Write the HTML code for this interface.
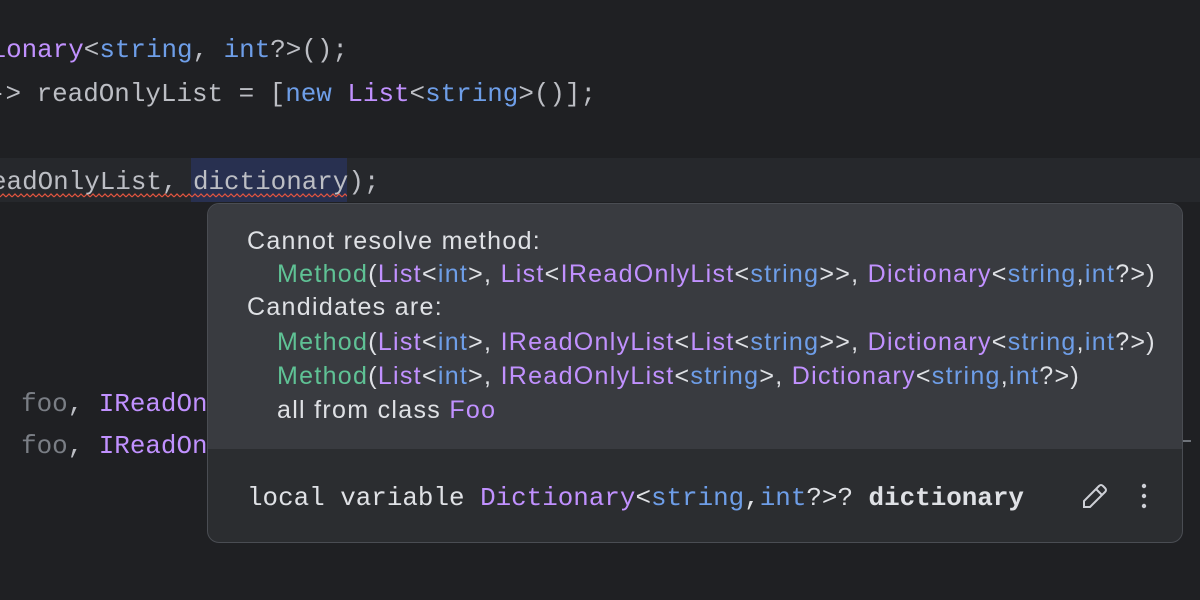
<!DOCTYPE html>
<html><head><meta charset="utf-8"><style>
body{margin:0;width:1200px;height:600px;background:#1e1f22;overflow:hidden;position:relative}
.bg{position:absolute;left:0;top:0;width:1200px;height:600px;background:#1f2023}
.code{position:absolute;font-family:"Liberation Mono",monospace;font-size:25.9px;color:#bcbec4;white-space:pre;line-height:30px}
.p{color:#c191ff}.b{color:#6e9ee8}.g{color:#5fc295}.gr{color:#7a7e85}
.cur{position:absolute;left:0;top:158px;width:1200px;height:44px;background:#26282c}
.hl{position:absolute;left:191px;top:158px;width:156px;height:44px;background:#283050}
.pop{position:absolute;left:207px;top:203px;width:974px;height:338px;border:1px solid #4a4d53;border-radius:12px;background:#2b2d30;overflow:hidden}
.top{position:absolute;left:0;top:0;width:100%;height:245px;background:#393b40}
.t{position:absolute;font-family:"Liberation Sans",sans-serif;font-size:25px;letter-spacing:1.3px;color:#dfe1e5;white-space:pre;line-height:30px}
</style></head><body>
<div class="bg"></div>
<div class="cur"></div><div class="hl"></div>
<svg style="position:absolute;left:0;top:193px" width="347" height="6"><defs><pattern id="w" width="6" height="6" patternUnits="userSpaceOnUse"><path d="M0 4 L3 1 L6 4" fill="none" stroke="#e5553f" stroke-width="1.2"/></pattern></defs><rect width="347" height="6" fill="url(#w)"/></svg>
<div class="code" style="left:-25px;top:35px">t<span class="p">ionary</span>&lt;<span class="b">string</span>, <span class="b">int</span>?&gt;();</div>
<div class="code" style="left:-10px;top:79px">-&gt; readOnlyList = [<span class="b">new</span> <span class="p">List</span>&lt;<span class="b">string</span>&gt;()];</div>
<div class="code" style="left:-9px;top:167px">eadOnlyList, dictionary);</div>
<div class="code" style="left:-10px;top:389px"><span class="gr">· foo</span>, <span class="p">IReadOnly</span></div>
<div class="code" style="left:-10px;top:431px"><span class="gr">· foo</span>, <span class="p">IReadOnly</span></div>
<div style="position:absolute;left:1183px;top:440px;width:8px;height:2px;background:#6f737a"></div>
<div class="pop">
<div class="top"></div>
<div class="t" style="left:39px;top:22px">Cannot resolve method:</div>
<div class="t" style="left:69px;top:55px"><span class="g">Method</span>(<span class="p">List</span>&lt;<span class="b">int</span>&gt;, <span class="p">List</span>&lt;<span class="p">IReadOnlyList</span>&lt;<span class="b">string</span>&gt;&gt;, <span class="p">Dictionary</span>&lt;<span class="b">string</span>,<span class="b">int</span>?&gt;)</div>
<div class="t" style="left:39px;top:88px">Candidates are:</div>
<div class="t" style="left:69px;top:123px"><span class="g">Method</span>(<span class="p">List</span>&lt;<span class="b">int</span>&gt;, <span class="p">IReadOnlyList</span>&lt;<span class="p">List</span>&lt;<span class="b">string</span>&gt;&gt;, <span class="p">Dictionary</span>&lt;<span class="b">string</span>,<span class="b">int</span>?&gt;)</div>
<div class="t" style="left:69px;top:157px"><span class="g">Method</span>(<span class="p">List</span>&lt;<span class="b">int</span>&gt;, <span class="p">IReadOnlyList</span>&lt;<span class="b">string</span>&gt;, <span class="p">Dictionary</span>&lt;<span class="b">string</span>,<span class="b">int</span>?&gt;)</div>
<div class="t" style="left:69px;top:191px">all from class <span class="p">Foo</span></div>
<div class="code" style="left:39px;top:279px;color:#dfe1e5">local variable <span class="p">Dictionary</span>&lt;<span class="b">string</span>,<span class="b">int</span>?&gt;? <b>dictionary</b></div>
<svg style="position:absolute;left:873px;top:278px" width="28" height="28" viewBox="0 0 28 28" fill="none" stroke="#ced0d6" stroke-width="2"><path d="M3 25 L3 19 L18 4 Q20 2 22 4 L24 6 Q26 8 24 10 L9 25 Z M15 7 L21 13"/></svg>
<svg style="position:absolute;left:932px;top:278px" width="8" height="30"><circle cx="4" cy="4" r="2.2" fill="#ced0d6"/><circle cx="4" cy="14" r="2.2" fill="#ced0d6"/><circle cx="4" cy="24" r="2.2" fill="#ced0d6"/></svg>
</div>
</body></html>
